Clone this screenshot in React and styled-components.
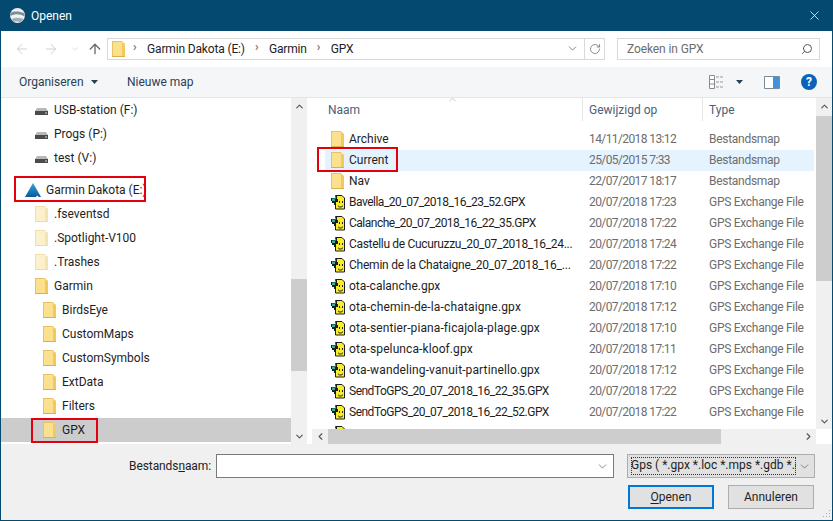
import React from "react";
import styled, { createGlobalStyle } from "styled-components";
import {
  ArrowLeft,
  ArrowRight,
  ArrowUp,
  ChevronDown,
  ChevronUp,
  ChevronLeft,
  ChevronRight,
  RotateCw,
  Search,
  X,
} from "lucide-react";

const navItems = [
  { label: "USB-station (F:)", icon: "drive", indent: 34, drop: 4 },
  { label: "Progs (P:)", icon: "drive", indent: 34, drop: 4 },
  { label: "test (V:)", icon: "drive", indent: 34, drop: 4 },
  { label: "Garmin Dakota (E:)", icon: "garmin", indent: 24, slot: 21, gapAbove: true, mark: { left: 13, width: 132, top: -2, height: 26 } },
  { label: ".fseventsd", icon: "hidden", indent: 34 },
  { label: ".Spotlight-V100", icon: "hidden", indent: 34 },
  { label: ".Trashes", icon: "hidden", indent: 34 },
  { label: "Garmin", icon: "folder", indent: 34 },
  { label: "BirdsEye", icon: "folder", indent: 42 },
  { label: "CustomMaps", icon: "folder", indent: 42 },
  { label: "CustomSymbols", icon: "folder", indent: 42 },
  { label: "ExtData", icon: "folder", indent: 42 },
  { label: "Filters", icon: "folder", indent: 42 },
  { label: "GPX", icon: "folder", indent: 42, selected: true, mark: { left: 30, width: 67, top: 0, height: 25 } },
];

const MAP = "Bestandsmap";
const GPS = "GPS Exchange File";

const files = [
  { name: "Archive", date: "14/11/2018 13:12", type: MAP, folder: true },
  { name: "Current", date: "25/05/2015 7:33", type: MAP, folder: true, hover: true, mark: { left: -8, width: 81, top: -3, height: 25 } },
  { name: "Nav", date: "22/07/2017 18:17", type: MAP, folder: true },
  { name: "Bavella_20_07_2018_16_23_52.GPX", date: "20/07/2018 17:23", type: GPS, tight: -0.5 },
  { name: "Calanche_20_07_2018_16_22_35.GPX", date: "20/07/2018 17:22", type: GPS, tight: -0.5 },
  { name: "Castellu de Cucuruzzu_20_07_2018_16_24...", date: "20/07/2018 17:24", type: GPS, tight: -0.32 },
  { name: "Chemin de la Chataigne_20_07_2018_16_...", date: "20/07/2018 17:22", type: GPS, tight: -0.22 },
  { name: "ota-calanche.gpx", date: "20/07/2018 17:10", type: GPS },
  { name: "ota-chemin-de-la-chataigne.gpx", date: "20/07/2018 17:12", type: GPS, tight: 0.15 },
  { name: "ota-sentier-piana-ficajola-plage.gpx", date: "20/07/2018 17:10", type: GPS, tight: 0.1 },
  { name: "ota-spelunca-kloof.gpx", date: "20/07/2018 17:11", type: GPS, tight: 0.1 },
  { name: "ota-wandeling-vanuit-partinello.gpx", date: "20/07/2018 17:12", type: GPS, tight: 0.12 },
  { name: "SendToGPS_20_07_2018_16_22_35.GPX", date: "20/07/2018 17:22", type: GPS, tight: -0.5 },
  { name: "SendToGPS_20_07_2018_16_22_52.GPX", date: "20/07/2018 17:22", type: GPS, tight: -0.5 },
  { name: "", date: "", type: "" },
];

function FolderIcon({ pale }) {
  return (
    <svg width="13" height="16" viewBox="0 0 13 16">
      <path d="M0 0h10l3 3v13H0z" fill={pale ? "#fcf1cf" : "#fbe08e"} />
      <path d="M0 0h10v1H1v15H0z" fill={pale ? "#f0e0b0" : "#e6c465"} />
      <path d="M10 1l3 2v13h-3z" fill={pale ? "#f6e4ae" : "#f2c95a"} />
      <path d="M0 15h13v1H0z" fill={pale ? "#eedcae" : "#dcb04a"} />
    </svg>
  );
}

function DriveIcon() {
  return (
    <svg width="13" height="7" viewBox="0 0 13 7">
      <path d="M2 0h9l2 3H0z" fill="#b8b8b8" />
      <path d="M0 3h13v4H0z" fill="#4a4a4a" />
      <path d="M10 4.5h2v1h-2z" fill="#d8d8d8" />
    </svg>
  );
}

function GarminIcon() {
  return (
    <svg width="16" height="14" viewBox="0 0 16 14">
      <defs>
        <linearGradient id="garminFill" x1="0" y1="0" x2="0" y2="1">
          <stop offset="0" stopColor="#38a4dc" />
          <stop offset="1" stopColor="#0a5a98" />
        </linearGradient>
      </defs>
      <path d="M8 0l8 14H0z" fill="url(#garminFill)" />
      <path d="M12 12.5l2 1.500h-3z" fill="#ffffff" />
    </svg>
  );
}

function GpxIcon() {
  return (
    <svg width="14" height="15" viewBox="0 0 14 15">
      <path d="M4.500.5h6.500l2.500 2.500v11h-9z" fill="#f8ec2e" stroke="#1c1c1c" />
      <path d="M0 3h4V1h2v3h1v3H5v3H3V8H1V6H0z" fill="#17201f" />
      <path d="M1 3.500h3v2.500H1zM4 1.500h1v2H4z" fill="#2fb3a4" />
      <path d="M8 6h1v2H8zM11 6h1v2h-1zM7 10c1 2 3.500 2 5 0v1c-1.500 2-4 2-5 0z" fill="#222222" />
    </svg>
  );
}

function GlobeIcon() {
  return (
    <svg width="15" height="15" viewBox="0 0 15 15">
      <circle cx="7.500" cy="7.500" r="7.500" fill="#eef0f2" />
      <path d="M.6 5c3-2 8.500-2 13.800.4.300 1 .4 2 .1 3C10 5.500 5 5.500.2 8 0 7 .2 6 .6 5z" fill="#7f8a94" />
      <path d="M1.500 11c4-1.800 8-1.800 12 0-.7 1.300-1.800 2.500-3.300 3.300-2.700-1.200-5.200-1.200-6.700-.4C2.600 13.200 2 12.100 1.500 11z" fill="#a4adb5" />
    </svg>
  );
}

function ViewIcon() {
  return (
    <svg width="16" height="14" viewBox="0 0 16 14">
      <path d="M.5.5h5v13h-5zM.5 4.500h5M.5 9h5" fill="#fff" stroke="#8a8a8a" />
      <path d="M7 2h8M7 7h8M7 12h8" stroke="#9a9a9a" strokeDasharray="3 1" />
    </svg>
  );
}

function PaneIcon() {
  return (
    <svg width="16" height="13" viewBox="0 0 16 13">
      <path d="M.5.500h15v12H.5z" fill="#fff" stroke="#7a8a96" />
      <path d="M9 1h6v11H9z" fill="#3f93dc" />
    </svg>
  );
}

function Caret() {
  return (
    <svg width="7" height="4" viewBox="0 0 7 4">
      <path d="M0 0h7L3.500 4z" fill="#2b3f55" />
    </svg>
  );
}

function navIcon(kind) {
  if (kind === "drive") return <DriveIcon />;
  if (kind === "garmin") return <GarminIcon />;
  return <FolderIcon pale={kind === "hidden"} />;
}

export default function App() {
  return (
    <>
      <GlobalStyle />
      <Dialog>
        <TitleBar>
          <GlobeIcon />
          <TitleText>Openen</TitleText>
          <CloseButton>
            <X size={15} strokeWidth={1.25} color="#ffffff" />
          </CloseButton>
        </TitleBar>

        <AddressRow>
          <NavButtons>
            <NavSlot $gap={0}>
              <ArrowLeft size={16} strokeWidth={1.5} color="#d0d0d0" />
            </NavSlot>
            <NavSlot $gap={13}>
              <ArrowRight size={16} strokeWidth={1.5} color="#d0d0d0" />
            </NavSlot>
            <NavSlot $gap={11}>
              <ChevronDown size={10} strokeWidth={2} color="#d8d8d8" />
            </NavSlot>
            <NavSlot $gap={7}>
              <ArrowUp size={16} strokeWidth={2} color="#6a6a6a" />
            </NavSlot>
          </NavButtons>
          <Breadcrumb>
            <FolderSlot>
              <FolderIcon />
            </FolderSlot>
            <Crumb>Garmin Dakota (E:)</Crumb>
            <Crumb>Garmin</Crumb>
            <Crumb>GPX</Crumb>
            <BreadcrumbEnd>
              <ChevronDown size={13} strokeWidth={1.5} color="#6a6a6a" />
              <RefreshCell>
                <RotateCw size={12} strokeWidth={1.5} color="#6a6a6a" />
              </RefreshCell>
            </BreadcrumbEnd>
          </Breadcrumb>
          <SearchBox>
            <span>Zoeken in GPX</span>
            <MirroredSearch size={12} strokeWidth={2} color="#555555" />
          </SearchBox>
        </AddressRow>

        <Toolbar>
          <ToolText>
            Organiseren <Caret />
          </ToolText>
          <ToolText>Nieuwe map</ToolText>
          <ToolIcons>
            <ViewIcon />
            <Caret />
            <PaneIcon />
            <HelpBadge>?</HelpBadge>
          </ToolIcons>
        </Toolbar>

        <Body>
          <Sidebar>
            <NavList>
              {navItems.map((item) => (
                <NavRow key={item.label} $indent={item.indent} $selected={item.selected} $gapAbove={item.gapAbove}>
                  <IconSlot $width={item.slot || 19} $drop={item.drop ?? 1}>
                    {navIcon(item.icon)}
                  </IconSlot>
                  {item.label}
                  {item.mark && <Marker {...markProps(item.mark)} />}
                </NavRow>
              ))}
            </NavList>
            <ScrollTrack>
              <ArrowCell>
                <ChevronUp size={11} strokeWidth={2.5} color="#555555" />
              </ArrowCell>
              <VerticalSpace>
                <VerticalThumb $top={165} $height={92} />
              </VerticalSpace>
              <ArrowCell>
                <ChevronDown size={11} strokeWidth={2.5} color="#555555" />
              </ArrowCell>
            </ScrollTrack>
          </Sidebar>

          <Main>
            <MainTop>
              <FileArea>
                <HeaderRow>
                  <HeaderCell $width={271} $pad={16}>
                    Naam
                    <SortMark>
                      <ChevronUp size={11} strokeWidth={1} color="#8a8a8a" />
                    </SortMark>
                  </HeaderCell>
                  <HeaderCell $width={120} $pad={6}>Gewijzigd op</HeaderCell>
                  <HeaderCell $width={113} $pad={6}>Type</HeaderCell>
                </HeaderRow>
                <FileList>
                  {files.map((file, i) => (
                    <FileRow key={file.name || i} $hover={file.hover}>
                      <NameCell>
                        <IconSlot $width={18} $drop={0}>
                          {file.folder ? <FolderIcon /> : <GpxIcon />}
                        </IconSlot>
                        <NameText $tight={file.tight || 0}>{file.name}</NameText>
                      </NameCell>
                      <DateCell>{file.date}</DateCell>
                      <TypeCell>{file.type}</TypeCell>
                      {file.mark && <Marker {...markProps(file.mark)} />}
                    </FileRow>
                  ))}
                </FileList>
              </FileArea>
              <ScrollTrack>
                <ArrowCell>
                  <ChevronUp size={11} strokeWidth={2.5} color="#555555" />
                </ArrowCell>
                <VerticalSpace>
                  <VerticalThumb $top={2} $height={165} />
                </VerticalSpace>
                <ArrowCell>
                  <ChevronDown size={11} strokeWidth={2.5} color="#555555" />
                </ArrowCell>
              </ScrollTrack>
            </MainTop>
            <HorizontalBar>
              <HorizontalTrack>
                <ArrowCell>
                  <ChevronLeft size={11} strokeWidth={2.5} color="#555555" />
                </ArrowCell>
                <HorizontalThumb />
                <ArrowCell>
                  <ChevronRight size={11} strokeWidth={2.5} color="#555555" />
                </ArrowCell>
              </HorizontalTrack>
            </HorizontalBar>
          </Main>
        </Body>

        <Footer>
          <NameLine>
            <NameLabel>
              Bestands<u>n</u>aam:
            </NameLabel>
            <NameInput>
              <ChevronDown size={13} strokeWidth={1.25} color="#555555" />
            </NameInput>
            <FilterSelect>
              <FilterText>Gps ( *.gpx *.loc *.mps *.gdb *.gpx)</FilterText>
              <ChevronDown size={13} strokeWidth={1.25} color="#555555" />
            </FilterSelect>
          </NameLine>
          <ButtonLine>
            <DialogButton $primary>
              <u>O</u>penen
            </DialogButton>
            <DialogButton>Annuleren</DialogButton>
          </ButtonLine>
          <Grip>
            <svg width="10" height="10" viewBox="0 0 10 10">
              <path d="M8 1h1v1H8zM5 4h1v1H5zM8 4h1v1H8zM2 7h1v1H2zM5 7h1v1H5zM8 7h1v1H8z" fill="#a8a8a8" />
            </svg>
          </Grip>
        </Footer>
      </Dialog>
    </>
  );
}

const markProps = (mark) => ({
  $left: mark.left,
  $width: mark.width,
  $top: mark.top,
  $height: mark.height,
});

const GlobalStyle = createGlobalStyle`
  html, body {
    margin: 0;
    padding: 0;
    background: #ffffff;
  }
  body {
    font-family: Roboto, "Liberation Sans", sans-serif;
    font-size: 12px;
    color: #1e1e1e;
  }
`;

const Dialog = styled.div`
  width: 833px;
  height: 521px;
  box-sizing: border-box;
  border: 1px solid #04496f;
  border-top: 0;
  background: #ffffff;
  display: flex;
  flex-direction: column;
  overflow: hidden;
`;

const TitleBar = styled.div`
  height: 31px;
  flex: none;
  background: #04496f;
  color: #ffffff;
  display: flex;
  align-items: center;
  padding: 0 9px;
`;

const TitleText = styled.div`
  margin-left: 6px;
  flex: 1;
`;

const CloseButton = styled.div`
  display: flex;
  margin-right: 1px;
`;

const AddressRow = styled.div`
  height: 35px;
  flex: none;
  display: flex;
  align-items: center;
  padding: 0 12px 1px 13px;
`;

const NavButtons = styled.div`
  width: 93px;
  display: flex;
  align-items: center;
`;

const NavSlot = styled.div`
  display: flex;
  margin-left: ${(p) => p.$gap}px;
`;

const Breadcrumb = styled.div`
  width: 498px;
  height: 22px;
  box-sizing: border-box;
  border: 1px solid #d9d9d9;
  display: flex;
  align-items: center;
  padding-left: 4px;
`;

const FolderSlot = styled.div`
  display: flex;
  margin-right: -2px;
`;

const Crumb = styled.div`
  color: #222222;
  margin-left: 24px;
  letter-spacing: -0.15px;
  white-space: nowrap;
  position: relative;

  &::before {
    content: "›";
    position: absolute;
    left: -14px;
    top: -2px;
    color: #777777;
    font-weight: 700;
  }
`;

const BreadcrumbEnd = styled.div`
  margin-left: auto;
  display: flex;
  align-items: center;
  height: 100%;
`;

const RefreshCell = styled.div`
  width: 19px;
  height: 100%;
  margin-left: 5px;
  border-left: 1px solid #d9d9d9;
  display: flex;
  align-items: center;
  justify-content: center;
`;

const SearchBox = styled.div`
  width: 203px;
  height: 22px;
  box-sizing: border-box;
  margin-left: 12px;
  border: 1px solid #d9d9d9;
  color: #6d6d6d;
  letter-spacing: -0.1px;
  display: flex;
  align-items: center;
  justify-content: space-between;
  padding: 0 6px 0 9px;
`;

const MirroredSearch = styled(Search)`
  transform: scaleX(-1);
`;

const Toolbar = styled.div`
  height: 31px;
  flex: none;
  box-sizing: border-box;
  background: #f5f6f7;
  border-bottom: 1px solid #e5e5e5;
  display: flex;
  align-items: center;
  padding-left: 18px;
  color: #2b3f55;
`;

const ToolText = styled.div`
  width: 108px;
  display: flex;
  align-items: center;
  gap: 7px;
`;

const ToolIcons = styled.div`
  margin-left: auto;
  margin-right: 15px;
  display: flex;
  align-items: center;
  gap: 11px;

  svg:nth-child(2),
  svg:nth-child(3) {
    margin-right: 10px;
  }
`;

const HelpBadge = styled.div`
  width: 16px;
  height: 16px;
  border-radius: 50%;
  background: #0a63b8;
  color: #ffffff;
  font-weight: 700;
  font-size: 12px;
  line-height: 16px;
  text-align: center;
`;

const Body = styled.div`
  height: 346px;
  flex: none;
  display: flex;
`;

const Sidebar = styled.div`
  width: 306px;
  flex: none;
  display: flex;
  margin-right: 5px;
`;

const NavList = styled.div`
  width: 290px;
  flex: none;
  overflow: hidden;
`;

const NavRow = styled.div`
  position: relative;
  height: 24px;
  box-sizing: border-box;
  padding-bottom: 1px;
  display: flex;
  align-items: center;
  padding-left: ${(p) => p.$indent}px;
  margin-top: ${(p) => (p.$gapAbove ? 8 : 0)}px;
  background: ${(p) => (p.$selected ? "#cccccc" : "transparent")};
  white-space: nowrap;
`;

const IconSlot = styled.div`
  width: ${(p) => p.$width}px;
  flex: none;
  display: flex;
  align-items: center;
  margin-top: ${(p) => p.$drop}px;
`;

const Marker = styled.div`
  position: absolute;
  left: ${(p) => p.$left}px;
  top: ${(p) => p.$top}px;
  width: ${(p) => p.$width}px;
  height: ${(p) => p.$height}px;
  box-sizing: border-box;
  border: 2px solid #e2000f;
`;

const ScrollTrack = styled.div`
  width: 16px;
  flex: none;
  background: #f0f0f0;
  display: flex;
  flex-direction: column;
`;

const ArrowCell = styled.div`
  width: 16px;
  height: 16px;
  flex: none;
  display: flex;
  align-items: center;
  justify-content: center;
`;

const VerticalSpace = styled.div`
  flex: 1;
  position: relative;
`;

const VerticalThumb = styled.div`
  position: absolute;
  left: 0;
  right: 0;
  top: ${(p) => p.$top}px;
  height: ${(p) => p.$height}px;
  background: #cdcdcd;
`;

const Main = styled.div`
  flex: 1;
  min-width: 0;
  display: flex;
  flex-direction: column;
`;

const MainTop = styled.div`
  height: 331px;
  flex: none;
  display: flex;
`;

const FileArea = styled.div`
  flex: 1;
  min-width: 0;
  overflow: hidden;
`;

const HeaderRow = styled.div`
  height: 27px;
  display: flex;
  color: #4c607a;
`;

const HeaderCell = styled.div`
  position: relative;
  width: ${(p) => p.$width}px;
  height: 23px;
  box-sizing: border-box;
  padding: 5px 0 0 ${(p) => p.$pad}px;
  border-right: 1px solid #e5e5e5;

  &:last-child {
    border-right: 0;
  }
`;

const SortMark = styled.div`
  position: absolute;
  left: 135px;
  top: -4px;
  display: flex;
`;

const FileList = styled.div`
  padding: 4px 2px 0 13px;
`;

const FileRow = styled.div`
  position: relative;
  height: 21px;
  box-sizing: border-box;
  padding-bottom: 1px;
  display: grid;
  grid-template-columns: 258px 120px 1fr;
  align-items: center;
  background: ${(p) => (p.$hover ? "#e5f3ff" : "transparent")};
`;

const NameCell = styled.div`
  display: flex;
  align-items: center;
  padding-left: 6px;
  white-space: nowrap;
  overflow: hidden;
`;

const NameText = styled.span`
  letter-spacing: ${(p) => p.$tight}px;
`;

const DateCell = styled.div`
  padding-left: 6px;
  color: #6d6d6d;
  letter-spacing: -0.6px;
  white-space: nowrap;
`;

const TypeCell = styled.div`
  padding-left: 6px;
  color: #6d6d6d;
  letter-spacing: -0.28px;
  white-space: nowrap;
`;

const HorizontalBar = styled.div`
  height: 15px;
  flex: none;
  padding-right: 16px;
`;

const HorizontalTrack = styled.div`
  height: 15px;
  background: #f0f0f0;
  display: flex;
  align-items: center;
`;

const HorizontalThumb = styled.div`
  width: 393px;
  height: 15px;
  background: #cdcdcd;
  margin-right: auto;
`;

const Footer = styled.div`
  flex: 1;
  position: relative;
  background: #f0f0f0;
  padding-top: 10px;
`;

const NameLine = styled.div`
  display: flex;
  align-items: center;
`;

const NameLabel = styled.div`
  width: 210px;
  text-align: right;
  margin-right: 5px;
  letter-spacing: -0.1px;
`;

const NameInput = styled.div`
  width: 398px;
  height: 24px;
  box-sizing: border-box;
  background: #ffffff;
  border: 1px solid #7a7a7a;
  display: flex;
  align-items: center;
  justify-content: flex-end;
  padding-right: 4px;
`;

const FilterSelect = styled.div`
  width: 188px;
  height: 24px;
  box-sizing: border-box;
  margin-left: 13px;
  background: #e1e1e1;
  border: 1px solid #adadad;
  display: flex;
  align-items: center;
  padding: 0 3px;
`;

const FilterText = styled.div`
  width: 165px;
  height: 18px;
  line-height: 17px;
  box-sizing: border-box;
  margin-right: 2px;
  outline: 1px dotted #333333;
  outline-offset: -1px;
  overflow: hidden;
  white-space: nowrap;
`;

const ButtonLine = styled.div`
  display: flex;
  justify-content: flex-end;
  gap: 14px;
  margin-top: 7px;
  padding-right: 18px;
`;

const DialogButton = styled.div`
  width: 86px;
  height: 24px;
  box-sizing: border-box;
  background: #e1e1e1;
  border: ${(p) => (p.$primary ? "2px solid #0078d7" : "1px solid #adadad")};
  display: flex;
  align-items: center;
  justify-content: center;

  u {
    text-underline-offset: 2px;
  }
`;

const Grip = styled.div`
  position: absolute;
  right: 1px;
  bottom: 1px;
  display: flex;
`;
